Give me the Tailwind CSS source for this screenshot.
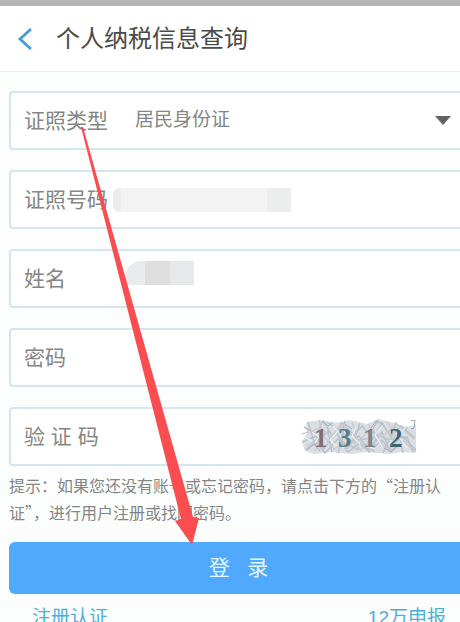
<!DOCTYPE html>
<html lang="zh-CN">
<head>
  <meta charset="UTF-8">
  <meta name="viewport" content="width=device-width, initial-scale=1.0">
  <title>个人纳税信息查询</title>
  <script src="https://cdn.jsdelivr.net/npm/@tailwindcss/browser@4"></script>
</head>
<body class="relative h-screen overflow-hidden bg-[#fcfefe] font-['Liberation_Sans','Noto_Sans_CJK_SC',sans-serif] text-[#858585]">
  <!-- Status bar edge -->
  <div class="h-[6px] bg-[#b5b5b5]"></div>

  <header class="flex h-[66px] items-center border-b border-[#ececec] bg-white pl-4">
    <button type="button" aria-label="返回" class="mr-5 flex w-5 justify-center">
      <svg class="h-6 w-5" viewBox="0 0 20 24" fill="none" stroke="#3f9fd4" stroke-width="2.8">
        <path d="M15 2 4 12 15 22"/>
      </svg>
    </button>
    <h1 class="text-[24px] leading-8 text-[#4a4a4a]">个人纳税信息查询</h1>
  </header>

  <main class="pt-[19px] pl-[9px]">
    <form>
      <div class="flex flex-col gap-5">
        <div class="relative flex h-[59px] items-center rounded-l border-2 border-r-0 border-[#d5e7ed] bg-white pl-[13px]">
          <label for="id-type" class="w-[111px] shrink-0 text-[21px]">证照类型</label>
          <select id="id-type" class="h-full min-w-0 flex-1 appearance-none bg-transparent text-[19px] outline-none">
            <option>居民身份证</option>
          </select>
          <svg class="pointer-events-none absolute right-[9px] h-[9px] w-4" viewBox="0 0 16 9" fill="#626262">
            <path d="M0 0h16L8 9z"/>
          </svg>
        </div>

        <div class="flex h-[59px] items-center rounded-l border-2 border-r-0 border-[#d5e7ed] bg-white pl-[13px]">
          <label for="id-number" class="w-[89px] shrink-0 text-[21px]">证照号码</label>
          <!-- Masked value -->
          <div class="flex h-6 w-[178px] shrink-0 overflow-hidden rounded-l-md">
            <span class="w-2 bg-[#ececec]"></span>
            <span class="flex-1 bg-[#f3f3f3]"></span>
            <span class="w-6 bg-[#ebecec]"></span>
          </div>
          <input id="id-number" type="text" class="h-full min-w-0 flex-1 bg-transparent text-[19px] outline-none">
        </div>

        <div class="flex h-[59px] items-center rounded-l border-2 border-r-0 border-[#d5e7ed] bg-white pl-[13px]">
          <label for="name" class="w-[101px] shrink-0 text-[21px]">姓名</label>
          <!-- Masked value -->
          <div class="mb-3 flex h-6 w-[69px] shrink-0 overflow-hidden rounded-tl-2xl">
            <span class="w-5 bg-[#eaebec]"></span>
            <span class="w-[25px] bg-[#dededf]"></span>
            <span class="flex-1 bg-[#e7e8e9]"></span>
          </div>
          <input id="name" type="text" class="h-full min-w-0 flex-1 bg-transparent text-[19px] outline-none">
        </div>

        <div class="flex h-[59px] items-center rounded-l border-2 border-r-0 border-[#d5e7ed] bg-white pl-[13px]">
          <label for="password" class="w-[111px] shrink-0 text-[21px]">密码</label>
          <input id="password" type="password" class="h-full min-w-0 flex-1 bg-transparent text-[19px] outline-none">
        </div>

        <div class="flex h-[59px] items-center rounded-l border-2 border-r-0 border-[#d5e7ed] bg-white pr-[43px] pl-[13px]">
          <label for="captcha" class="w-[111px] shrink-0 text-[21px]">验 证 码</label>
          <input id="captcha" type="text" class="h-full min-w-0 flex-1 bg-transparent text-[19px] outline-none">
          <svg class="h-9 w-[115px] shrink-0" viewBox="0 0 115 36" role="img" aria-label="1312">
            <path fill="#dadfe4" d="M4 3 18 1 34 4 48 1 65 5 76 0 92 4 104 8 114 6 114 34 99 33 88 35 65 33 50 35 28 33 12 35 3 32 0 23 5 14z"/>
            <g fill="none" stroke="#b9c2cb" stroke-width="1.5">
              <path d="M2 8l12 7 7-13 10 16 9-14 12 12 8-9 11 13 9-16 8 13 11-10 14 12M0 23l14-6 8 13 12-17 10 16 13-12 9 14 14-18 7 17 13-13 14 14M3 31l11-8 9 11 13-14 10 13 12-9 9 9 13-12 9 12 12-11 12 10"/>
              <path d="M6 3l7 23 13-14 4 21M25 3l17 12-6 19M43 2l-4 20 18 9M58 4l-6 18 16-3 4 14M76 1l-7 12 18 8-6 13M94 3l-5 17 16-2 6 15M106 8l-9 8 4 18"/>
            </g>
            <g fill="none" stroke="#cdc8cd" stroke-width="1.3">
              <path d="M0 15l19-6 9 9 14-12 13 18 13-14 12 8 15-13 17 15M5 27l16-11 11 14 17-9 10 10 13-14 15 15 14-9 12 8"/>
              <path d="M17 1l4 14-8 17M50 4l4 10-8 16M66 5l10 14-8 14M85 2l8 14-5 17"/>
            </g>
            <path fill="none" stroke="#f0f3f5" stroke-width="1.2" d="M10 13l7 5-4 6M31 7l5 5-8 9 6 6M54 8l-4 9 8 8M79 8l-6 8 7 11M103 9l-6 9 8 11M2 18l8 4M41 29l8-5M65 27l8 3"/>
            <path fill="none" stroke="#a3adb8" d="M21 2l5 5 5-4M69 9l5-7 7 3M109 2l4-1-1 8-3 1M43 5l7 5M5 31l7-6 6 7M82 29l7 4 7-7"/>
            <g class="font-['Liberation_Serif',serif] text-[27px] font-bold">
              <text x="12" y="28" fill="#806f72">1</text>
              <text x="36" y="28" fill="#587d8a">3</text>
              <text x="61" y="28" fill="#85838b">1</text>
              <text x="87" y="28" fill="#3f6472">2</text>
            </g>
          </svg>
        </div>
      </div>

      <p class="mt-[6px] pr-[9px] font-['Noto_Sans_CJK_SC',sans-serif] text-[16px] leading-[27px]">提示：如果您还没有账号或忘记密码，请点击下方的“注册认证”，进行用户注册或找回密码。</p>

      <button type="button" class="mt-4 block h-[52px] w-full rounded-l-md bg-[#51a9fd] pl-2 text-center text-[21px] text-[#e3f7ff]">登&nbsp;&nbsp;&nbsp;录</button>
    </form>

    <nav class="mt-[10px] flex justify-between pr-[14px] pl-[23px] text-[19px] leading-7 text-[#4eaddb]">
      <a href="#">注册认证</a>
      <a href="#">12万申报</a>
    </nav>
  </main>

  <!-- Pointer to the login button -->
  <svg class="pointer-events-none absolute top-[126px] left-[80px] h-[420px] w-[121px]" viewBox="0 0 121 420" fill="#f94d4f">
    <path d="M1 1 3 1 113 391 119 392 112 419 95 395 101 393z"/>
  </svg>
</body>
</html>
